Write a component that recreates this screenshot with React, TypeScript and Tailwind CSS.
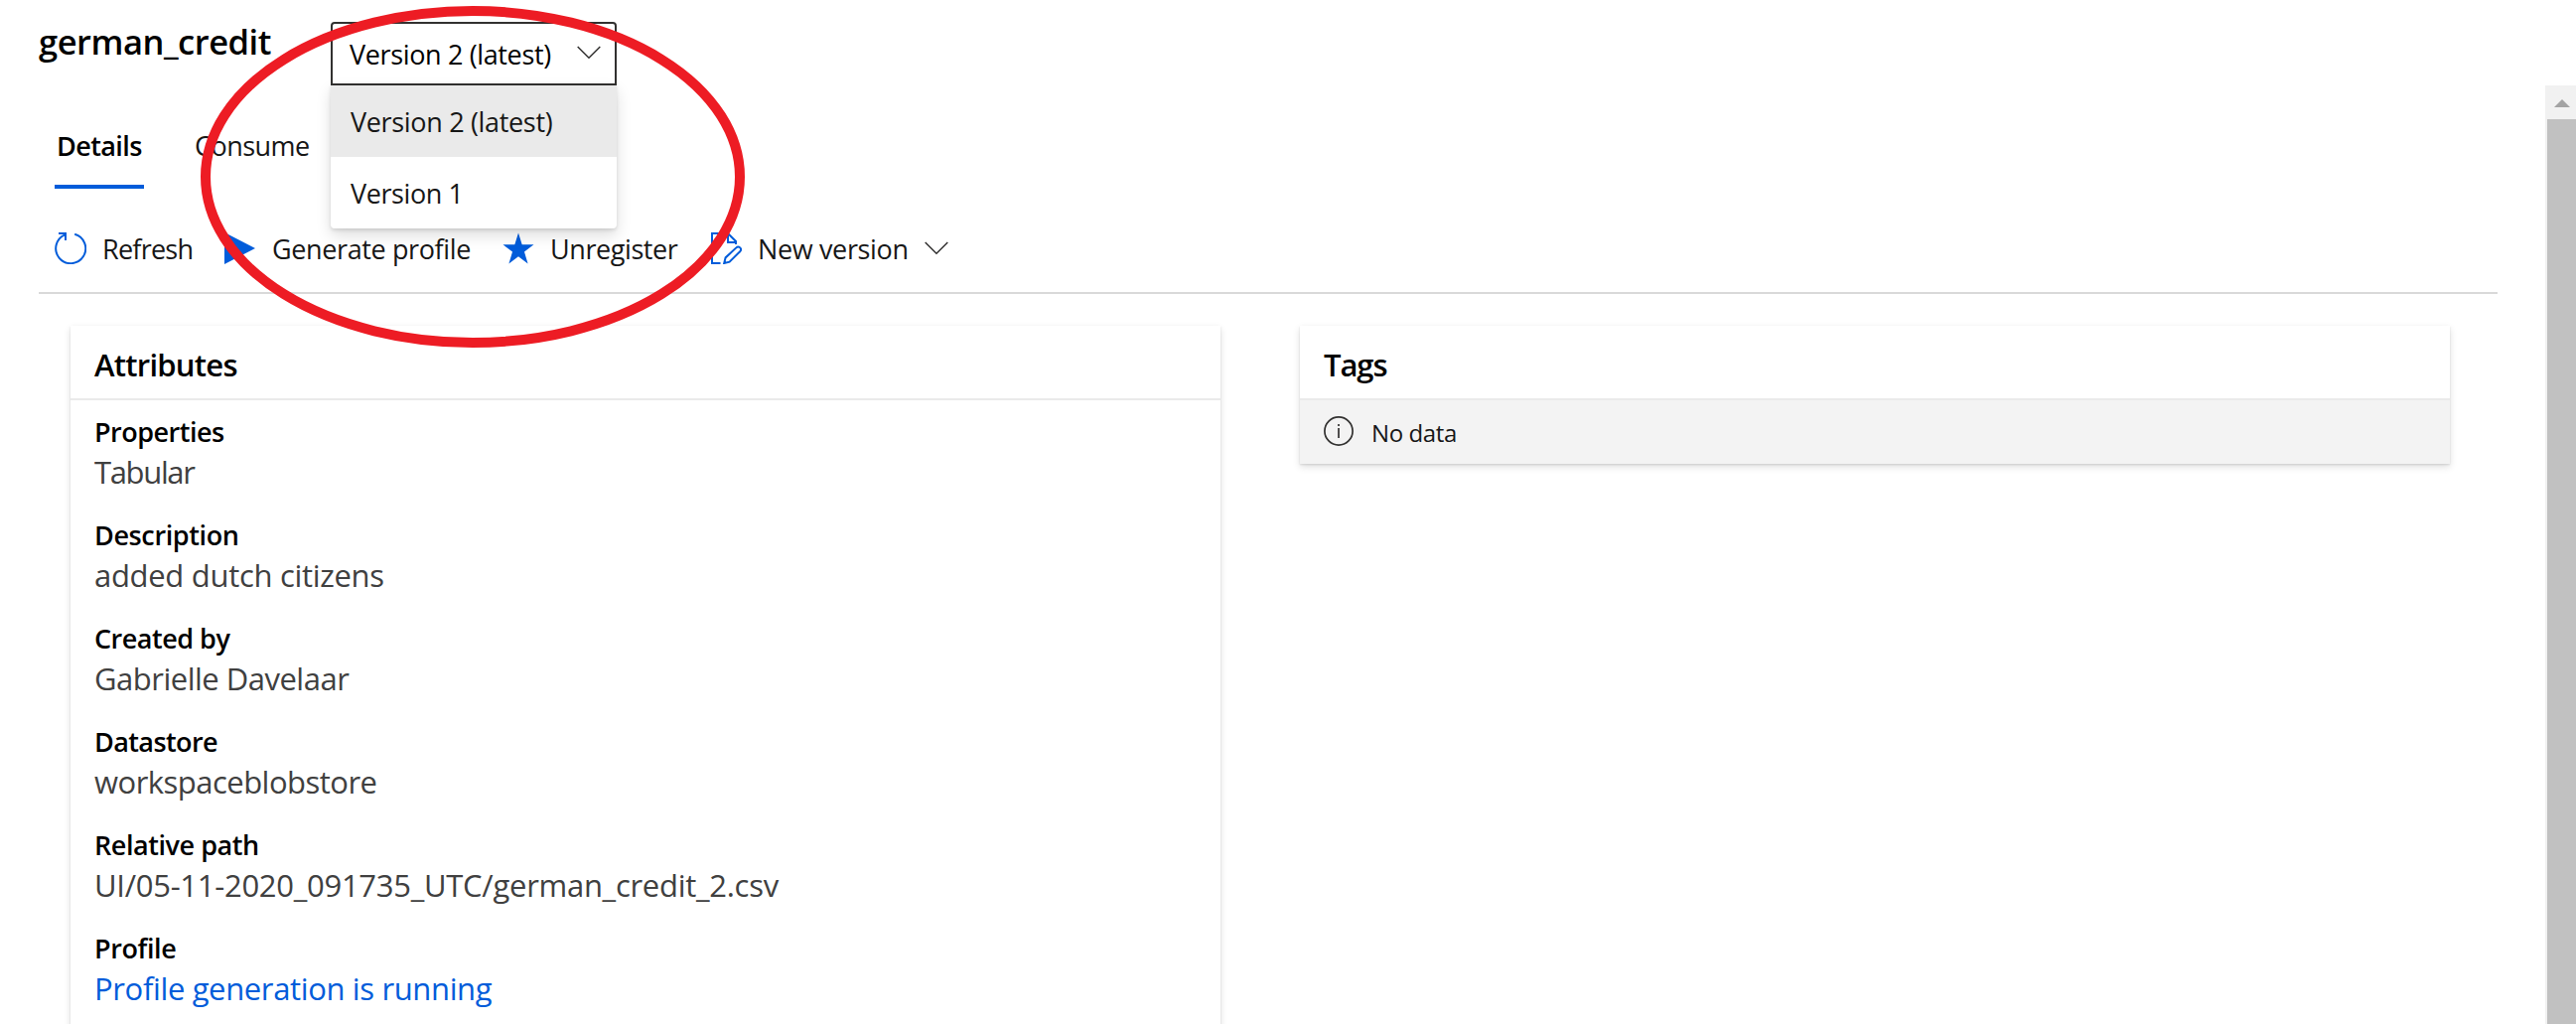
import type { ReactNode } from "react";

const LABEL = "text-[27px] leading-10";

const attributes = [
  { label: "Properties", ls: "tracking-[-0.5px]", value: "Tabular", vls: "tracking-[-1.35px]" },
  { label: "Description", ls: "tracking-[-0.38px]", value: "added dutch citizens", vls: "tracking-[-0.3px]" },
  { label: "Created by", ls: "tracking-[-0.49px]", value: "Gabrielle Davelaar", vls: "tracking-[-0.5px]" },
  { label: "Datastore", ls: "tracking-[-0.6px]", value: "workspaceblobstore", vls: "tracking-[-0.52px]" },
  { label: "Relative path", ls: "tracking-[-0.45px]", value: "UI/05-11-2020_091735_UTC/german_credit_2.csv", vls: "tracking-[-0.28px]" },
  { label: "Profile", ls: "tracking-[-0.4px]", value: "Profile generation is running", vls: "tracking-[-0.36px]", link: true },
];

function Chevron() {
  return (
    <svg width="24" height="14" viewBox="0 0 24 14" fill="none" stroke="#323130" strokeWidth="1.5">
      <path d="M0.7 1 L12 12.2 L23.3 1" />
    </svg>
  );
}

function RefreshIcon() {
  return (
    <svg width="32" height="32" viewBox="0 0 32 32" fill="none" stroke="#015cda" strokeWidth="2">
      <path d="M20.2 1.7 A15 15 0 1 1 10.5 2.3" />
      <path d="M4 1 H11 V8" />
    </svg>
  );
}

function PlayIcon() {
  return (
    <svg width="32" height="32" viewBox="0 0 32 32" fill="#015cda">
      <path d="M1 0 L32 16 L1 32 Z" />
    </svg>
  );
}

function StarIcon() {
  return (
    <svg width="32" height="32" viewBox="0 0 32 32" fill="#015cda">
      <path d="M16 0.5 L19.7 12.3 H31.5 L22 19.6 L25.6 31.5 L16 24.2 L6.4 31.5 L10 19.6 L0.5 12.3 H12.3 Z" />
    </svg>
  );
}

function EditPageIcon() {
  return (
    <svg width="32" height="32" viewBox="0 0 32 32" fill="none" stroke="#015cda" strokeWidth="2">
      <path d="M10.5 31 H2 V1 H18 L26 9 V12" />
      <path d="M18 1 V10 H26" />
      <path d="M14.2 31 L15.6 25.4 L26.4 15.4 A2.6 2.6 0 0 1 30.2 19.2 L19.6 29.6 Z" />
    </svg>
  );
}

function Card({ title, tracking, children }: { title: string; tracking: string; children: ReactNode }) {
  return (
    <section className="w-[1158px] shrink-0 bg-white shadow-[0_3.2px_7.2px_rgba(0,0,0,0.132),0_0.6px_1.8px_rgba(0,0,0,0.108)]">
      <h2 className={`flex h-[75px] items-center border-b-2 border-[#eaeaea] pt-1.5 pl-6 text-[31px] font-semibold text-black ${tracking}`}>
        {title}
      </h2>
      {children}
    </section>
  );
}

export default function App() {
  return (
    <div className="relative flex h-[1031px] w-[2594px] overflow-hidden bg-white font-['Open_Sans',sans-serif] text-[27px] text-[#171717]">
      <div className="flex w-[2563px] shrink-0 flex-col">
        <header className="flex h-[86px] shrink-0 items-start pl-[39px]">
          <h1 className="w-[294px] pt-5 text-[34.5px] leading-[44px] font-semibold tracking-[-0.47px] text-black">german_credit</h1>
          <div className="relative mt-[22px] h-16 w-72">
            <button className="flex h-16 w-72 items-center justify-between rounded-t-[4px] border-2 border-[#323130] pr-[14px] pl-[17px] text-black">
              <span className="pt-[2px] tracking-[-0.36px] whitespace-nowrap">Version 2 (latest)</span>
              <span className="-mt-[2px]"><Chevron /></span>
            </button>
            <ul className="absolute top-16 left-0 z-10 w-72 overflow-hidden rounded-b-[4px] bg-white shadow-[0_6.4px_14.4px_rgba(0,0,0,0.132),0_1.2px_3.6px_rgba(0,0,0,0.108)]">
              <li className="flex h-[72px] items-center bg-[#eaeaea] pt-[2px] pl-[20px] tracking-[-0.33px]">Version 2 (latest)</li>
              <li className="flex h-[72px] items-center pt-[2px] pl-[20px] tracking-[-0.4px]">Version 1</li>
            </ul>
          </div>
        </header>

        <nav className="flex h-[104px] shrink-0 gap-[50px] pt-[41px] pl-[55px]">
          <div className="h-[63px] w-[90px] border-b-4 border-[#015cda] pl-[2px] leading-10 font-semibold tracking-[-0.6px] text-black">Details</div>
          <div className="pl-px leading-10 tracking-[-0.55px]">Consume</div>
        </nav>

        <div className="ml-[39px] flex h-[106px] w-[2476px] shrink-0 items-center border-b-2 border-[#d9d9d9] pt-4 pl-4">
          <div className="flex w-[170px] items-center gap-4">
            <RefreshIcon />
            <span className="pt-[3px] tracking-[-0.75px]">Refresh</span>
          </div>
          <div className="flex w-[281px] items-center gap-[17px]">
            <PlayIcon />
            <span className="pt-[3px] tracking-[-0.38px] whitespace-nowrap">Generate profile</span>
          </div>
          <div className="flex w-[209px] items-center gap-4">
            <StarIcon />
            <span className="pt-[3px] tracking-[-0.42px]">Unregister</span>
          </div>
          <div className="flex items-center gap-4">
            <EditPageIcon />
            <span className="pt-[3px] tracking-[-0.36px]">New version</span>
            <Chevron />
          </div>
        </div>

        <main className="flex shrink-0 items-start gap-20 pt-8 pl-[71px]">
          <Card title="Attributes" tracking="tracking-[-0.75px]">
            <dl className="flex flex-col gap-6 pt-3 pl-6">
              {attributes.map((a) => (
                <div key={a.label}>
                  <dt className={`${LABEL} font-semibold text-black ${a.ls}`}>{a.label}</dt>
                  <dd className={`text-[31px] leading-10 ${a.link ? "text-[#015cda]" : "text-[#404040]"} ${a.vls}`}>{a.value}</dd>
                </div>
              ))}
              <div className="h-20" />
            </dl>
          </Card>
          <Card title="Tags" tracking="tracking-[-1.1px]">
            <div className="flex h-16 items-center bg-[#f3f3f3] pl-6">
              <svg className="mb-[2px]" width="30" height="30" viewBox="0 0 30 30" fill="none" stroke="#323130" strokeWidth="1.7">
                <circle cx="15" cy="15" r="14.1" />
                <path d="M15 12 V22 M15 8 V10" />
              </svg>
              <span className="pt-[2px] pl-[18px] text-[24px] tracking-[-0.39px]">No data</span>
            </div>
          </Card>
        </main>
      </div>

      <div className="mt-[86px] flex w-[31px] flex-col bg-[#f1f1f1]">
        <div className="flex h-[34px] items-center justify-center pt-[2px] pl-[3px]">
          <svg width="16" height="8" viewBox="0 0 16 8" fill="#a3a3a3"><path d="M8 0 L16 8 H0 Z" /></svg>
        </div>
        <div className="ml-[2px] flex-1 bg-[#c1c1c1]" />
      </div>

      <svg className="pointer-events-none absolute top-0 left-[196px] z-20" width="560" height="356" viewBox="0 0 560 356" fill="none">
        <ellipse cx="280" cy="178" rx="269" ry="167" stroke="#ed1c24" strokeWidth="10" />
      </svg>
    </div>
  );
}
